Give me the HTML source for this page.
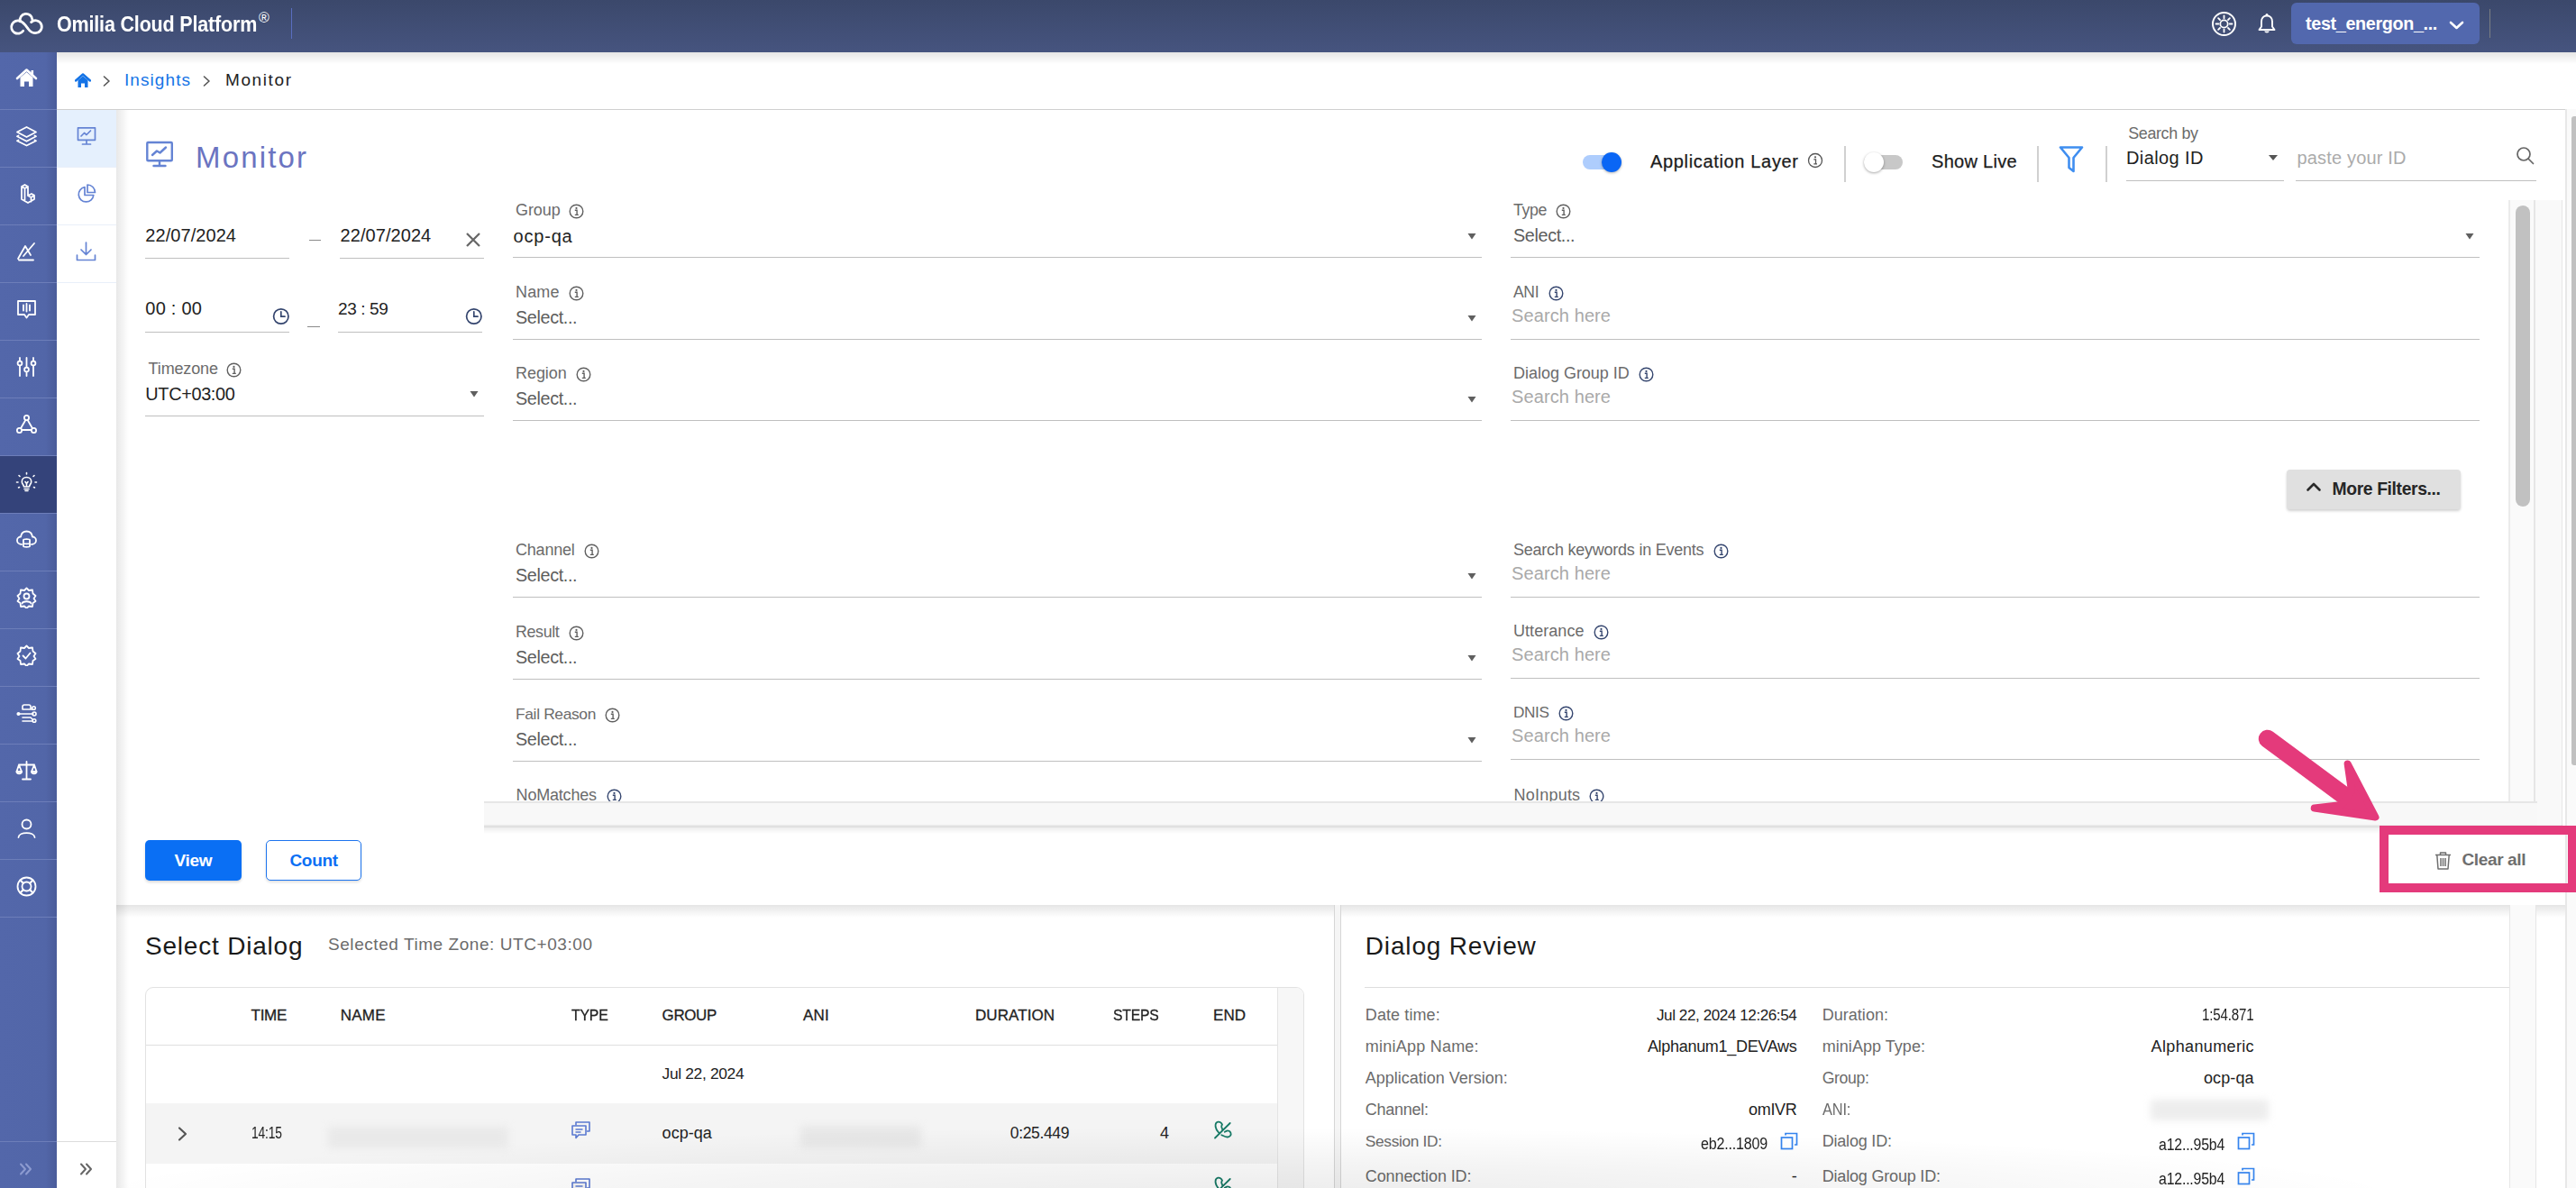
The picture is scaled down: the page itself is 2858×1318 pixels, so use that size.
<!DOCTYPE html>
<html><head><meta charset="utf-8"><title>Monitor</title>
<style>
html,body{margin:0;padding:0;}
body{width:2858px;height:1318px;overflow:hidden;position:relative;background:#fff;font-family:"Liberation Sans",sans-serif;}
.a{position:absolute;display:block;}
.t{position:absolute;white-space:nowrap;}
</style></head><body>
<div class="a" style="left:0px;top:0px;width:2858px;height:58px;background:linear-gradient(180deg,#3b486b 0%,#46547f 100%);"></div>
<div class="a" style="left:0px;top:58px;width:63px;height:1260px;background:linear-gradient(90deg,#5367aa 0%,#5266a8 80%,#4a5c9a 100%);"></div>
<div class="a" style="left:0px;top:121px;width:63px;height:1px;background:#6d7eb9;"></div>
<div class="a" style="left:0px;top:185px;width:63px;height:1px;background:#6d7eb9;"></div>
<div class="a" style="left:0px;top:249px;width:63px;height:1px;background:#6d7eb9;"></div>
<div class="a" style="left:0px;top:313px;width:63px;height:1px;background:#6d7eb9;"></div>
<div class="a" style="left:0px;top:377px;width:63px;height:1px;background:#6d7eb9;"></div>
<div class="a" style="left:0px;top:441px;width:63px;height:1px;background:#6d7eb9;"></div>
<div class="a" style="left:0px;top:505px;width:63px;height:1px;background:#6d7eb9;"></div>
<div class="a" style="left:0px;top:569px;width:63px;height:1px;background:#6d7eb9;"></div>
<div class="a" style="left:0px;top:633px;width:63px;height:1px;background:#6d7eb9;"></div>
<div class="a" style="left:0px;top:697px;width:63px;height:1px;background:#6d7eb9;"></div>
<div class="a" style="left:0px;top:761px;width:63px;height:1px;background:#6d7eb9;"></div>
<div class="a" style="left:0px;top:825px;width:63px;height:1px;background:#6d7eb9;"></div>
<div class="a" style="left:0px;top:889px;width:63px;height:1px;background:#6d7eb9;"></div>
<div class="a" style="left:0px;top:953px;width:63px;height:1px;background:#6d7eb9;"></div>
<div class="a" style="left:0px;top:1017px;width:63px;height:1px;background:#6d7eb9;"></div>
<div class="a" style="left:0px;top:506px;width:63px;height:63px;background:#34437a;"></div>
<div class="a" style="left:0px;top:1266px;width:63px;height:1px;background:#6d7eb9;"></div>
<div class="a" style="left:63px;top:58px;width:2783px;height:63px;background:#fff;"></div>
<div class="a" style="left:63px;top:58px;width:2795px;height:13px;background:linear-gradient(180deg,rgba(0,0,0,0.10),rgba(0,0,0,0));"></div>
<div class="a" style="left:63px;top:121px;width:2783px;height:1px;background:#cfcfcf;"></div>
<div class="a" style="left:63px;top:122px;width:66px;height:1196px;background:#fff;"></div>
<div class="a" style="left:63px;top:122px;width:66px;height:63px;background:#e5f0fd;"></div>
<div class="a" style="left:63px;top:185px;width:66px;height:1px;background:#e9eff9;"></div>
<div class="a" style="left:63px;top:249px;width:66px;height:1px;background:#e9eff9;"></div>
<div class="a" style="left:63px;top:313px;width:66px;height:1px;background:#e9eff9;"></div>
<div class="a" style="left:63px;top:1266px;width:66px;height:1px;background:#dcdcdc;"></div>
<div class="a" style="left:129px;top:122px;width:14px;height:1196px;background:linear-gradient(90deg,rgba(0,0,0,0.09),rgba(0,0,0,0));"></div>
<div class="a" style="left:2846px;top:121px;width:12px;height:1197px;background:#fafafa;border-left:2px solid #e8e8e8;box-sizing:border-box;"></div>
<div class="a" style="left:2853px;top:129px;width:5px;height:720px;background:#c1c1c1;border-radius:3px 0 0 3px;"></div>
<svg class="a" style="left:0px;top:0px;" width="60" height="58" viewBox="0 0 60 58"><g fill="none" stroke="#fff" stroke-width="3" stroke-linecap="round" transform="translate(29.2 26.2) scale(0.93) translate(-28.8 -26.2)"><path d="M25 34.8 A7.7 7.7 0 1 1 21.6 23.2"/><path d="M21.6 23.2 C25.5 24.5 28 28.5 31 32.5 C33 35.3 35.5 37.4 38.6 37.4 A7.5 7.5 0 1 0 34.6 24.5"/><path d="M21.4 23.6 A7.4 7.4 0 1 1 36 21.6"/></g></svg>
<div class="t" style="left:62.50px;top:11.98px;font-size:24px;line-height:30px;color:#fff;font-weight:700;letter-spacing:-0.200px;transform:scaleX(0.8963);transform-origin:left center;">Omilia Cloud Platform</div>
<div class="t" style="left:287.00px;top:9.95px;font-size:16px;line-height:20px;color:#fff;">®</div>
<div class="a" style="left:323px;top:9px;width:1px;height:34px;background:#5a6ec0;"></div>
<svg class="a" style="left:2453px;top:12px;" width="29" height="29" viewBox="0 0 29 29"><circle cx="14.5" cy="14.5" r="12.5" fill="none" stroke="#fff" stroke-width="2"/><circle cx="14.5" cy="14.5" r="4.2" fill="none" stroke="#fff" stroke-width="1.8"/><g stroke="#fff" stroke-width="1.8" stroke-linecap="round"><line x1="14.5" y1="5.5" x2="14.5" y2="8.3"/><line x1="14.5" y1="20.7" x2="14.5" y2="23.5"/><line x1="5.5" y1="14.5" x2="8.3" y2="14.5"/><line x1="20.7" y1="14.5" x2="23.5" y2="14.5"/><line x1="8.1" y1="8.1" x2="10" y2="10"/><line x1="19" y1="19" x2="20.9" y2="20.9"/><line x1="8.1" y1="20.9" x2="10" y2="19"/><line x1="19" y1="10" x2="20.9" y2="8.1"/></g></svg>
<svg class="a" style="left:2504px;top:14px;" width="22" height="24" viewBox="0 0 22 24"><path d="M11 3.5 C7 3.5 5 6.5 5 10 L5 15.5 L2.5 19 L19.5 19 L17 15.5 L17 10 C17 6.5 15 3.5 11 3.5 Z" fill="none" stroke="#fff" stroke-width="1.9" stroke-linejoin="round"/><circle cx="11" cy="2.6" r="1.5" fill="#fff"/><path d="M8.3 20.5 C8.5 23 13.5 23 13.7 20.5 Z" fill="#fff"/></svg>
<div class="a" style="left:2542px;top:3px;width:209px;height:46px;background:#5268ae;border-radius:6px;"></div>
<div class="t" style="left:2558.00px;top:14.05px;font-size:19.77px;line-height:25px;color:#fff;font-weight:700;letter-spacing:-0.348px;">test_energon_...</div>
<svg class="a" style="left:2717px;top:23px;" width="17" height="10" viewBox="0 0 17 10"><path d="M2 2 L8.5 8 L15 2" fill="none" stroke="#fff" stroke-width="2.6" stroke-linecap="round" stroke-linejoin="round"/></svg>
<div class="a" style="left:2762px;top:10px;width:1px;height:32px;background:#7b7f82;"></div>
<svg class="a" style="left:17px;top:75px;" width="25" height="24" viewBox="0 0 25 24"><path d="M2 12 L12.5 2.5 L23 12" fill="none" stroke="#fff" stroke-width="2.6" stroke-linecap="round" stroke-linejoin="round"/><path d="M5.5 11 L12.5 5 L19.5 11 L19.5 21 L15 21 L15 15.5 L10 15.5 L10 21 L5.5 21 Z" fill="#fff"/><rect x="17.5" y="3" width="2.6" height="6" fill="#fff"/></svg>
<svg class="a" style="left:17px;top:139px;" width="25" height="24" viewBox="0 0 25 24"><path d="M12.5 2 L23 7.5 L12.5 13 L2 7.5 Z" fill="none" stroke="#fff" stroke-width="1.8" stroke-linecap="round" stroke-linejoin="round"/><path d="M3.5 11.5 L2 12.3 L12.5 17.8 L23 12.3 L21.5 11.5" fill="none" stroke="#fff" stroke-width="1.8" stroke-linecap="round" stroke-linejoin="round"/><path d="M3.5 16.5 L2 17.3 L12.5 22.5 L23 17.3 L21.5 16.5" fill="none" stroke="#fff" stroke-width="1.8" stroke-linecap="round" stroke-linejoin="round"/></svg>
<svg class="a" style="left:17px;top:203px;" width="25" height="24" viewBox="0 0 25 24"><path d="M7 4 L10.5 2 L14 4 L14 14 L18 12 L21 13.8 L21 18 L14 22 L7 18 Z M7 4 L10.5 6 L14 4 M10.5 6 L10.5 20 M14 14 L17.5 16 L21 13.8 M17.5 16 L17.5 20.5" fill="none" stroke="#fff" stroke-width="1.8" stroke-linecap="round" stroke-linejoin="round"/></svg>
<svg class="a" style="left:17px;top:267px;" width="25" height="24" viewBox="0 0 25 24"><path d="M3 20 L11 6 L17 16 M4 21.5 L20 21.5 M9 17 L21 3" fill="none" stroke="#fff" stroke-width="1.8" stroke-linecap="round" stroke-linejoin="round"/></svg>
<svg class="a" style="left:17px;top:331px;" width="25" height="24" viewBox="0 0 25 24"><path d="M3 3 L22 3 L22 18 L15 18 L12.5 21.5 L10 18 L3 18 Z" fill="none" stroke="#fff" stroke-width="1.8" stroke-linecap="round" stroke-linejoin="round"/><path d="M9 7.5 L9 13.5 M12.5 6 L12.5 14.5 M16 7.5 L16 13.5" fill="none" stroke="#fff" stroke-width="1.8" stroke-linecap="round" stroke-linejoin="round"/></svg>
<svg class="a" style="left:17px;top:395px;" width="25" height="24" viewBox="0 0 25 24"><path d="M5 2 L5 22 M12.5 2 L12.5 22 M20 2 L20 22" fill="none" stroke="#fff" stroke-width="1.8" stroke-linecap="round" stroke-linejoin="round"/><circle cx="5" cy="8" r="2.4" fill="#5266a8" stroke="#fff" stroke-width="1.8"/><circle cx="12.5" cy="15" r="2.4" fill="#5266a8" stroke="#fff" stroke-width="1.8"/><circle cx="20" cy="8" r="2.4" fill="#5266a8" stroke="#fff" stroke-width="1.8"/></svg>
<svg class="a" style="left:17px;top:459px;" width="25" height="24" viewBox="0 0 25 24"><path d="M12.5 5 L5 18 L20 18 Z" fill="none" stroke="#fff" stroke-width="1.8" stroke-linecap="round" stroke-linejoin="round"/><circle cx="12.5" cy="4.5" r="2.6" fill="#5266a8" stroke="#fff" stroke-width="1.8"/><circle cx="4.5" cy="18.5" r="2.6" fill="#5266a8" stroke="#fff" stroke-width="1.8"/><circle cx="20.5" cy="18.5" r="2.6" fill="#5266a8" stroke="#fff" stroke-width="1.8"/></svg>
<svg class="a" style="left:17px;top:523px;" width="25" height="24" viewBox="0 0 25 24"><path d="M12.5 6.5 C9 6.5 7.3 9 7.3 11.5 C7.3 14 9.5 15 9.5 17 L15.5 17 C15.5 15 17.7 14 17.7 11.5 C17.7 9 16 6.5 12.5 6.5 Z M10 19.5 L15 19.5 M11 21.5 L14 21.5 M11 11.5 L12.5 13.5 L14 11.5 M12.5 13.5 L12.5 16.5" fill="none" stroke="#fff" stroke-width="1.6" stroke-linecap="round" stroke-linejoin="round"/><path d="M12.5 1.5 L12.5 3 M4 4.5 L5 5.5 M21 4.5 L20 5.5 M1.5 12 L3 12 M22 12 L23.5 12 M3.5 18 L4.5 17.5 M21.5 18 L20.5 17.5" fill="none" stroke="#fff" stroke-width="1.6" stroke-linecap="round" stroke-linejoin="round"/></svg>
<svg class="a" style="left:17px;top:587px;" width="25" height="24" viewBox="0 0 25 24"><path d="M7 17 C3.5 17 2 14.5 2 12.5 C2 10 4 8.5 6 8.5 C6.5 5 9 2.5 12.5 2.5 C16 2.5 18.5 5 19 8.5 C21 8.5 23 10 23 12.5 C23 14.5 21.5 17 18 17" fill="none" stroke="#fff" stroke-width="1.8" stroke-linecap="round" stroke-linejoin="round"/><path d="M9 12 C9 11 16 11 16 12 M9 15.5 C9 16.5 16 16.5 16 15.5 M9 19 C9 20 16 20 16 19 M9 12 L9 19 M16 12 L16 19" fill="none" stroke="#fff" stroke-width="1.8" stroke-linecap="round" stroke-linejoin="round"/></svg>
<svg class="a" style="left:17px;top:651px;" width="25" height="24" viewBox="0 0 25 24"><path d="M12.5 1.5 L15 4 L19 3.5 L19.5 7.5 L22.5 10 L20.5 13 L22.5 16 L19.5 18 L19 22 L15 21.5 L12.5 24 L10 21.5 L6 22 L5.5 18 L2.5 16 L4.5 13 L2.5 10 L5.5 7.5 L6 3.5 L10 4 Z" fill="none" stroke="#fff" stroke-width="1.8" stroke-linecap="round" stroke-linejoin="round"/><circle cx="12.5" cy="10.5" r="3" fill="none" stroke="#fff" stroke-width="1.8" stroke-linecap="round" stroke-linejoin="round"/><path d="M7.5 18.5 C8.5 15.5 16.5 15.5 17.5 18.5" fill="none" stroke="#fff" stroke-width="1.8" stroke-linecap="round" stroke-linejoin="round"/></svg>
<svg class="a" style="left:17px;top:715px;" width="25" height="24" viewBox="0 0 25 24"><path d="M12.5 1.5 L15 4 L19 3.5 L19.5 7.5 L22.5 10 L20.5 13 L22.5 16 L19.5 18 L19 22 L15 21.5 L12.5 24 L10 21.5 L6 22 L5.5 18 L2.5 16 L4.5 13 L2.5 10 L5.5 7.5 L6 3.5 L10 4 Z" fill="none" stroke="#fff" stroke-width="1.8" stroke-linecap="round" stroke-linejoin="round"/><path d="M8.5 12.5 L11.5 15.5 L16.5 9.5" fill="none" stroke="#fff" stroke-width="1.8" stroke-linecap="round" stroke-linejoin="round"/></svg>
<svg class="a" style="left:17px;top:779px;" width="25" height="24" viewBox="0 0 25 24"><path d="M8 8 L8 5 C8 3.5 9 3 10 3 L15 3 C16 3 17 3.5 17 5 L17 8 M2.5 13 L20 13 M8 8 L19 8 M8 17 L17 17 L19 19 M8 21 L19 21" fill="none" stroke="#fff" stroke-width="1.6" stroke-linecap="round" stroke-linejoin="round"/><circle cx="3.5" cy="13" r="2" fill="#fff"/><circle cx="21" cy="13" r="2" fill="none" stroke="#fff" stroke-width="1.6" stroke-linecap="round" stroke-linejoin="round"/><circle cx="21" cy="20.5" r="1.8" fill="none" stroke="#fff" stroke-width="1.6" stroke-linecap="round" stroke-linejoin="round"/><circle cx="20.5" cy="6.5" r="1.8" fill="none" stroke="#fff" stroke-width="1.6" stroke-linecap="round" stroke-linejoin="round"/></svg>
<svg class="a" style="left:17px;top:843px;" width="25" height="24" viewBox="0 0 25 24"><path d="M12.5 2 L12.5 21 M8 21.5 L17 21.5 M4 5.5 L21 5.5 M4 5.5 L1.5 13 M4 5.5 L7 13 M21 5.5 L18 13 M21 5.5 L23.5 13" fill="none" stroke="#fff" stroke-width="1.8" stroke-linecap="round" stroke-linejoin="round"/><path d="M1.5 13 C1.5 16 7 16 7 13 Z M18 13 C18 16 23.5 16 23.5 13 Z" fill="none" stroke="#fff" stroke-width="1.8" stroke-linecap="round" stroke-linejoin="round"/></svg>
<svg class="a" style="left:17px;top:907px;" width="25" height="24" viewBox="0 0 25 24"><circle cx="12.5" cy="7.5" r="5" fill="none" stroke="#fff" stroke-width="1.8" stroke-linecap="round" stroke-linejoin="round"/><path d="M3.5 22 C4 15.5 21 15.5 21.5 22" fill="none" stroke="#fff" stroke-width="1.8" stroke-linecap="round" stroke-linejoin="round"/></svg>
<svg class="a" style="left:17px;top:971px;" width="25" height="24" viewBox="0 0 25 24"><circle cx="12.5" cy="12.5" r="10" fill="none" stroke="#fff" stroke-width="1.8" stroke-linecap="round" stroke-linejoin="round"/><circle cx="12.5" cy="12.5" r="5" fill="none" stroke="#fff" stroke-width="1.8" stroke-linecap="round" stroke-linejoin="round"/><path d="M5.5 5.5 L9 9 M19.5 5.5 L16 9 M5.5 19.5 L9 16 M19.5 19.5 L16 16" fill="none" stroke="#fff" stroke-width="2.2" stroke-linecap="round" stroke-linejoin="round"/></svg>
<svg class="a" style="left:20px;top:1289px;" width="17" height="16" viewBox="0 0 17 16"><path d="M3 2.5 L8 8 L3 13.5 M9 2.5 L14 8 L9 13.5" fill="none" stroke="#8d9bd0" stroke-width="2" stroke-linecap="round" stroke-linejoin="round"/></svg>
<svg class="a" style="left:87px;top:1289px;" width="17" height="16" viewBox="0 0 17 16"><path d="M3 2.5 L8 8 L3 13.5 M9 2.5 L14 8 L9 13.5" fill="none" stroke="#666" stroke-width="2" stroke-linecap="round" stroke-linejoin="round"/></svg>
<svg class="a" style="left:83px;top:81px;" width="18" height="17" viewBox="0 0 18 17"><path d="M1 8.5 L9 1.5 L17 8.5" fill="none" stroke="#1473e6" stroke-width="2.4" stroke-linecap="round" stroke-linejoin="round"/><path d="M3.5 8 L9 3.5 L14.5 8 L14.5 16 L11 16 L11 11.5 L7 11.5 L7 16 L3.5 16 Z" fill="#1473e6"/></svg>
<svg class="a" style="left:113px;top:83px;" width="11" height="14" viewBox="0 0 11 14"><path d="M2.5 2 L8 7 L2.5 12" fill="none" stroke="#555" stroke-width="1.6" stroke-linecap="round" stroke-linejoin="round"/></svg>
<div class="t" style="left:138.00px;top:77.01px;font-size:19px;line-height:24px;color:#1473e6;letter-spacing:1.074px;">Insights</div>
<svg class="a" style="left:224px;top:83px;" width="11" height="14" viewBox="0 0 11 14"><path d="M2.5 2 L8 7 L2.5 12" fill="none" stroke="#555" stroke-width="1.6" stroke-linecap="round" stroke-linejoin="round"/></svg>
<div class="t" style="left:250.00px;top:77.01px;font-size:19px;line-height:24px;color:#222;letter-spacing:1.607px;">Monitor</div>
<svg class="a" style="left:84px;top:140px;" width="24" height="22" viewBox="0 0 24 22"><rect x="2.5" y="1.8" width="19" height="13.5" fill="none" stroke="#6584d4" stroke-width="1.7" stroke-linecap="round" stroke-linejoin="round"/><path d="M12 15.5 L12 19 M7.5 20 L16.5 20 M6 11 L9.5 7.5 L12 9.5 L16.5 5" fill="none" stroke="#6584d4" stroke-width="1.7" stroke-linecap="round" stroke-linejoin="round"/></svg>
<svg class="a" style="left:84px;top:203px;" width="24" height="23" viewBox="0 0 24 23"><path d="M10 4.5 A8.3 8.3 0 1 0 19.8 13.5 L10 13.5 Z" fill="none" stroke="#6584d4" stroke-width="1.7" stroke-linecap="round" stroke-linejoin="round"/><path d="M13 2 L13 10.5 L21.5 10.5 A8.5 8.5 0 0 0 13 2 Z" fill="none" stroke="#6584d4" stroke-width="1.7" stroke-linecap="round" stroke-linejoin="round"/></svg>
<svg class="a" style="left:83px;top:267px;" width="25" height="24" viewBox="0 0 25 24"><path d="M12.5 2 L12.5 15 M7 10 L12.5 15.5 L18 10 M2.5 16 L2.5 21.5 L22.5 21.5 L22.5 16" fill="none" stroke="#6584d4" stroke-width="1.7" stroke-linecap="round" stroke-linejoin="round"/></svg>
<svg class="a" style="left:159px;top:155px;" width="36" height="32" viewBox="0 0 36 32"><rect x="4.3" y="3" width="27.5" height="20.3" rx="1" fill="none" stroke="#6584d4" stroke-width="2.4"/><path d="M18 23.5 L18 28 M11.5 29 L24.5 29" fill="none" stroke="#6584d4" stroke-width="2.4" stroke-linecap="round"/><path d="M10 17 L15 12.5 L18.5 14.5 L25 8.5" fill="none" stroke="#6584d4" stroke-width="2.4" stroke-linecap="round" stroke-linejoin="round"/></svg>
<div class="t" style="left:217.00px;top:154.06px;font-size:33px;line-height:41px;color:#6b74c1;letter-spacing:2.160px;">Monitor</div>
<div class="a" style="left:1756px;top:172px;width:42px;height:16px;background:#aecdfd;border-radius:8px;"></div>
<div class="a" style="left:1777px;top:169px;width:22px;height:22px;background:#0a66f5;border-radius:50%;box-shadow:0 1px 3px rgba(0,0,0,0.3);"></div>
<div class="t" style="left:1831.00px;top:166.97px;font-size:20px;line-height:25px;color:#1c1c1c;letter-spacing:0.660px;-webkit-text-stroke:0.25px #1c1c1c;">Application Layer</div>
<svg class="a" style="left:2005px;top:169px;" width="18" height="18" viewBox="0 0 18 18"><circle cx="9" cy="9" r="7.5" fill="none" stroke="#555" stroke-width="1.3"/><circle cx="9" cy="5.3" r="1.1" fill="#555"/><path d="M7.3 7.8 L9.5 7.8 L9.5 12.8 M7.3 12.8 L11 12.8" fill="none" stroke="#555" stroke-width="1.3"/></svg>
<div class="a" style="left:2046px;top:162px;width:2px;height:40px;background:#d0d0d0;"></div>
<div class="a" style="left:2068px;top:172px;width:43px;height:16px;background:#c8c8c8;border-radius:8px;"></div>
<div class="a" style="left:2068px;top:169px;width:22px;height:22px;background:#fff;border-radius:50%;box-shadow:0 1px 3px rgba(0,0,0,0.35);"></div>
<div class="t" style="left:2143.00px;top:166.97px;font-size:20px;line-height:25px;color:#1c1c1c;letter-spacing:0.290px;-webkit-text-stroke:0.25px #1c1c1c;">Show Live</div>
<div class="a" style="left:2260px;top:162px;width:2px;height:40px;background:#d0d0d0;"></div>
<svg class="a" style="left:2283px;top:161px;" width="30" height="32" viewBox="0 0 30 32"><path d="M3 2.5 L27 2.5 L17.5 14 L17.5 29 L12.5 25 L12.5 14 Z" fill="none" stroke="#3f8ef0" stroke-width="2.6" stroke-linejoin="round"/></svg>
<div class="a" style="left:2336px;top:162px;width:2px;height:40px;background:#d0d0d0;"></div>
<div class="t" style="left:2361.30px;top:137.00px;font-size:17.88px;line-height:22px;color:#6b6b6b;letter-spacing:-0.351px;">Search by</div>
<div class="t" style="left:2359.00px;top:163.37px;font-size:20px;line-height:25px;color:#222;letter-spacing:0.405px;">Dialog ID</div>
<svg class="a" style="left:2516px;top:170px;" width="12" height="10" viewBox="0 0 12 10"><path d="M1 2 L11 2 L6 8 Z" fill="#555"/></svg>
<div class="a" style="left:2359px;top:200px;width:175px;height:1px;background:#bfbfbf;"></div>
<div class="t" style="left:2548.50px;top:163.37px;font-size:20px;line-height:25px;color:#ababab;letter-spacing:0.171px;">paste your ID</div>
<svg class="a" style="left:2791px;top:162px;" width="22" height="22" viewBox="0 0 22 22"><circle cx="9" cy="9" r="7" fill="none" stroke="#666" stroke-width="1.7"/><line x1="14" y1="14" x2="19.5" y2="19.5" stroke="#666" stroke-width="1.7" stroke-linecap="round"/></svg>
<div class="a" style="left:2547px;top:200px;width:267px;height:1px;background:#bfbfbf;"></div>
<div class="t" style="left:161.30px;top:248.97px;font-size:20px;line-height:25px;color:#222;letter-spacing:0.067px;">22/07/2024</div>
<div class="a" style="left:161px;top:286px;width:160px;height:1px;background:#bfbfbf;"></div>
<div class="a" style="left:343px;top:266px;width:13px;height:1px;background:#8a8a8a;"></div>
<div class="t" style="left:377.50px;top:248.97px;font-size:20px;line-height:25px;color:#222;letter-spacing:0.067px;">22/07/2024</div>
<div class="a" style="left:377px;top:286px;width:160px;height:1px;background:#bfbfbf;"></div>
<svg class="a" style="left:516px;top:257px;" width="19" height="19" viewBox="0 0 19 19"><path d="M2 2 L16 16 M16 2 L2 16" stroke="#686868" stroke-width="2.3"/></svg>
<div class="t" style="left:161.30px;top:330.17px;font-size:20px;line-height:25px;color:#222;letter-spacing:0.240px;">00 : 00</div>
<svg class="a" style="left:302px;top:341px;" width="20" height="20" viewBox="0 0 20 20"><circle cx="9.8" cy="10" r="8.2" fill="none" stroke="#34456e" stroke-width="1.7"/><path d="M9.8 4.8 L9.8 10.2 L14 10.2" fill="none" stroke="#34456e" stroke-width="1.7" stroke-linecap="round"/></svg>
<div class="a" style="left:161px;top:368px;width:160px;height:1px;background:#bfbfbf;"></div>
<div class="a" style="left:341px;top:362px;width:14px;height:1px;background:#8a8a8a;"></div>
<div class="t" style="left:375.00px;top:331.01px;font-size:19.0px;line-height:24px;color:#222;letter-spacing:-0.401px;">23 : 59</div>
<svg class="a" style="left:515.5px;top:341px;" width="20" height="20" viewBox="0 0 20 20"><circle cx="9.8" cy="10" r="8.2" fill="none" stroke="#34456e" stroke-width="1.7"/><path d="M9.8 4.8 L9.8 10.2 L14 10.2" fill="none" stroke="#34456e" stroke-width="1.7" stroke-linecap="round"/></svg>
<div class="a" style="left:375px;top:368px;width:160px;height:1px;background:#bfbfbf;"></div>
<div class="t" style="left:164.60px;top:397.76px;font-size:18px;line-height:22px;color:#6b6b6b;letter-spacing:-0.138px;">Timezone</div>
<svg class="a" style="left:251px;top:401.5px;" width="17" height="17" viewBox="0 0 17 17"><circle cx="8.5" cy="8.5" r="7.3" fill="none" stroke="#5f5f5f" stroke-width="1.4"/><circle cx="8.5" cy="4.9" r="1.1" fill="#5f5f5f"/><path d="M6.8 7.3 L9.1 7.3 L9.1 12.4 M6.8 12.4 L10.8 12.4" fill="none" stroke="#5f5f5f" stroke-width="1.4"/></svg>
<div class="t" style="left:161.30px;top:424.59px;font-size:19.92px;line-height:25px;color:#222;letter-spacing:-0.353px;">UTC+03:00</div>
<svg class="a" style="left:520.5px;top:432.5px;" width="10" height="8" viewBox="0 0 10 8"><path d="M0.5 1 L9.5 1 L5 7.5 Z" fill="#5f5f5f"/></svg>
<div class="a" style="left:161px;top:461px;width:376px;height:1px;background:#bfbfbf;"></div>
<div class="t" style="left:572.00px;top:221.76px;font-size:18px;line-height:22px;color:#6b6b6b;letter-spacing:-0.082px;">Group</div>
<svg class="a" style="left:630.5px;top:225.5px;" width="17" height="17" viewBox="0 0 17 17"><circle cx="8.5" cy="8.5" r="7.3" fill="none" stroke="#5f5f5f" stroke-width="1.4"/><circle cx="8.5" cy="4.9" r="1.1" fill="#5f5f5f"/><path d="M6.8 7.3 L9.1 7.3 L9.1 12.4 M6.8 12.4 L10.8 12.4" fill="none" stroke="#5f5f5f" stroke-width="1.4"/></svg>
<div class="t" style="left:569.50px;top:249.57px;font-size:20px;line-height:25px;color:#222;letter-spacing:0.809px;">ocp-qa</div>
<svg class="a" style="left:1627.5px;top:257.5px;" width="10" height="8" viewBox="0 0 10 8"><path d="M0.5 1 L9.5 1 L5 7.5 Z" fill="#5f5f5f"/></svg>
<div class="a" style="left:569px;top:285px;width:1075px;height:1px;background:#bfbfbf;"></div>
<div class="t" style="left:572.00px;top:312.76px;font-size:18px;line-height:22px;color:#6b6b6b;letter-spacing:0.161px;">Name</div>
<svg class="a" style="left:630.5px;top:316.5px;" width="17" height="17" viewBox="0 0 17 17"><circle cx="8.5" cy="8.5" r="7.3" fill="none" stroke="#5f5f5f" stroke-width="1.4"/><circle cx="8.5" cy="4.9" r="1.1" fill="#5f5f5f"/><path d="M6.8 7.3 L9.1 7.3 L9.1 12.4 M6.8 12.4 L10.8 12.4" fill="none" stroke="#5f5f5f" stroke-width="1.4"/></svg>
<div class="t" style="left:572.00px;top:339.65px;font-size:19.76px;line-height:25px;color:#5c5c5c;letter-spacing:-0.349px;">Select...</div>
<svg class="a" style="left:1627.5px;top:348.5px;" width="10" height="8" viewBox="0 0 10 8"><path d="M0.5 1 L9.5 1 L5 7.5 Z" fill="#5f5f5f"/></svg>
<div class="a" style="left:569px;top:376px;width:1075px;height:1px;background:#bfbfbf;"></div>
<div class="t" style="left:572.00px;top:402.76px;font-size:18px;line-height:22px;color:#6b6b6b;letter-spacing:-0.049px;">Region</div>
<svg class="a" style="left:638.8px;top:406.5px;" width="17" height="17" viewBox="0 0 17 17"><circle cx="8.5" cy="8.5" r="7.3" fill="none" stroke="#5f5f5f" stroke-width="1.4"/><circle cx="8.5" cy="4.9" r="1.1" fill="#5f5f5f"/><path d="M6.8 7.3 L9.1 7.3 L9.1 12.4 M6.8 12.4 L10.8 12.4" fill="none" stroke="#5f5f5f" stroke-width="1.4"/></svg>
<div class="t" style="left:572.00px;top:429.65px;font-size:19.76px;line-height:25px;color:#5c5c5c;letter-spacing:-0.349px;">Select...</div>
<svg class="a" style="left:1627.5px;top:438.5px;" width="10" height="8" viewBox="0 0 10 8"><path d="M0.5 1 L9.5 1 L5 7.5 Z" fill="#5f5f5f"/></svg>
<div class="a" style="left:569px;top:466px;width:1075px;height:1px;background:#bfbfbf;"></div>
<div class="t" style="left:1679.00px;top:221.84px;font-size:17.78px;line-height:22px;color:#6b6b6b;letter-spacing:-0.349px;">Type</div>
<svg class="a" style="left:1726.0px;top:225.5px;" width="17" height="17" viewBox="0 0 17 17"><circle cx="8.5" cy="8.5" r="7.3" fill="none" stroke="#5f5f5f" stroke-width="1.4"/><circle cx="8.5" cy="4.9" r="1.1" fill="#5f5f5f"/><path d="M6.8 7.3 L9.1 7.3 L9.1 12.4 M6.8 12.4 L10.8 12.4" fill="none" stroke="#5f5f5f" stroke-width="1.4"/></svg>
<div class="t" style="left:1679.00px;top:248.65px;font-size:19.76px;line-height:25px;color:#5c5c5c;letter-spacing:-0.349px;">Select...</div>
<svg class="a" style="left:2734.5px;top:257.5px;" width="10" height="8" viewBox="0 0 10 8"><path d="M0.5 1 L9.5 1 L5 7.5 Z" fill="#5f5f5f"/></svg>
<div class="a" style="left:1676px;top:285px;width:1075px;height:1px;background:#bfbfbf;"></div>
<div class="t" style="left:1679.00px;top:312.93px;font-size:17.52px;line-height:22px;color:#6b6b6b;letter-spacing:-0.353px;">ANI</div>
<svg class="a" style="left:1717.5px;top:316.5px;" width="17" height="17" viewBox="0 0 17 17"><circle cx="8.5" cy="8.5" r="7.3" fill="none" stroke="#34456e" stroke-width="1.4"/><circle cx="8.5" cy="4.9" r="1.1" fill="#34456e"/><path d="M6.8 7.3 L9.1 7.3 L9.1 12.4 M6.8 12.4 L10.8 12.4" fill="none" stroke="#34456e" stroke-width="1.4"/></svg>
<div class="t" style="left:1677.00px;top:337.57px;font-size:20px;line-height:25px;color:#a9a9a9;letter-spacing:0.104px;">Search here</div>
<div class="a" style="left:1676px;top:376px;width:1075px;height:1px;background:#bfbfbf;"></div>
<div class="t" style="left:1679.00px;top:402.76px;font-size:18px;line-height:22px;color:#6b6b6b;letter-spacing:-0.019px;">Dialog Group ID</div>
<svg class="a" style="left:1817.8px;top:406.5px;" width="17" height="17" viewBox="0 0 17 17"><circle cx="8.5" cy="8.5" r="7.3" fill="none" stroke="#34456e" stroke-width="1.4"/><circle cx="8.5" cy="4.9" r="1.1" fill="#34456e"/><path d="M6.8 7.3 L9.1 7.3 L9.1 12.4 M6.8 12.4 L10.8 12.4" fill="none" stroke="#34456e" stroke-width="1.4"/></svg>
<div class="t" style="left:1677.00px;top:427.57px;font-size:20px;line-height:25px;color:#a9a9a9;letter-spacing:0.104px;">Search here</div>
<div class="a" style="left:1676px;top:466px;width:1075px;height:1px;background:#bfbfbf;"></div>
<div class="a" style="left:2537px;top:521px;width:193px;height:44px;background:#e0e0e0;border-radius:4px;box-shadow:0 2px 3px rgba(0,0,0,0.18);"></div>
<svg class="a" style="left:2558px;top:534px;" width="18" height="12" viewBox="0 0 18 12"><path d="M2.5 9.5 L9 3 L15.5 9.5" fill="none" stroke="#2a2a2a" stroke-width="2.6" stroke-linecap="round" stroke-linejoin="round"/></svg>
<div class="t" style="left:2587.50px;top:531.31px;font-size:19.29px;line-height:24px;color:#262626;font-weight:700;letter-spacing:-0.351px;">More Filters...</div>
<div class="t" style="left:572.00px;top:598.76px;font-size:18px;line-height:22px;color:#6b6b6b;letter-spacing:-0.209px;">Channel</div>
<svg class="a" style="left:647.8px;top:602.5px;" width="17" height="17" viewBox="0 0 17 17"><circle cx="8.5" cy="8.5" r="7.3" fill="none" stroke="#5f5f5f" stroke-width="1.4"/><circle cx="8.5" cy="4.9" r="1.1" fill="#5f5f5f"/><path d="M6.8 7.3 L9.1 7.3 L9.1 12.4 M6.8 12.4 L10.8 12.4" fill="none" stroke="#5f5f5f" stroke-width="1.4"/></svg>
<div class="t" style="left:572.00px;top:625.65px;font-size:19.76px;line-height:25px;color:#5c5c5c;letter-spacing:-0.349px;">Select...</div>
<svg class="a" style="left:1627.5px;top:634.5px;" width="10" height="8" viewBox="0 0 10 8"><path d="M0.5 1 L9.5 1 L5 7.5 Z" fill="#5f5f5f"/></svg>
<div class="a" style="left:569px;top:662px;width:1075px;height:1px;background:#bfbfbf;"></div>
<div class="t" style="left:572.00px;top:689.82px;font-size:17.83px;line-height:22px;color:#6b6b6b;letter-spacing:-0.348px;">Result</div>
<svg class="a" style="left:630.8px;top:693.5px;" width="17" height="17" viewBox="0 0 17 17"><circle cx="8.5" cy="8.5" r="7.3" fill="none" stroke="#5f5f5f" stroke-width="1.4"/><circle cx="8.5" cy="4.9" r="1.1" fill="#5f5f5f"/><path d="M6.8 7.3 L9.1 7.3 L9.1 12.4 M6.8 12.4 L10.8 12.4" fill="none" stroke="#5f5f5f" stroke-width="1.4"/></svg>
<div class="t" style="left:572.00px;top:716.65px;font-size:19.76px;line-height:25px;color:#5c5c5c;letter-spacing:-0.349px;">Select...</div>
<svg class="a" style="left:1627.5px;top:725.5px;" width="10" height="8" viewBox="0 0 10 8"><path d="M0.5 1 L9.5 1 L5 7.5 Z" fill="#5f5f5f"/></svg>
<div class="a" style="left:569px;top:753px;width:1075px;height:1px;background:#bfbfbf;"></div>
<div class="t" style="left:572.00px;top:780.96px;font-size:17.41px;line-height:22px;color:#6b6b6b;letter-spacing:-0.350px;">Fail Reason</div>
<svg class="a" style="left:671.4px;top:784.5px;" width="17" height="17" viewBox="0 0 17 17"><circle cx="8.5" cy="8.5" r="7.3" fill="none" stroke="#5f5f5f" stroke-width="1.4"/><circle cx="8.5" cy="4.9" r="1.1" fill="#5f5f5f"/><path d="M6.8 7.3 L9.1 7.3 L9.1 12.4 M6.8 12.4 L10.8 12.4" fill="none" stroke="#5f5f5f" stroke-width="1.4"/></svg>
<div class="t" style="left:572.00px;top:807.65px;font-size:19.76px;line-height:25px;color:#5c5c5c;letter-spacing:-0.349px;">Select...</div>
<svg class="a" style="left:1627.5px;top:816.5px;" width="10" height="8" viewBox="0 0 10 8"><path d="M0.5 1 L9.5 1 L5 7.5 Z" fill="#5f5f5f"/></svg>
<div class="a" style="left:569px;top:844px;width:1075px;height:1px;background:#bfbfbf;"></div>
<div class="t" style="left:1679.00px;top:598.76px;font-size:18px;line-height:22px;color:#6b6b6b;letter-spacing:-0.229px;">Search keywords in Events</div>
<svg class="a" style="left:1900.6px;top:602.5px;" width="17" height="17" viewBox="0 0 17 17"><circle cx="8.5" cy="8.5" r="7.3" fill="none" stroke="#34456e" stroke-width="1.4"/><circle cx="8.5" cy="4.9" r="1.1" fill="#34456e"/><path d="M6.8 7.3 L9.1 7.3 L9.1 12.4 M6.8 12.4 L10.8 12.4" fill="none" stroke="#34456e" stroke-width="1.4"/></svg>
<div class="t" style="left:1677.00px;top:623.57px;font-size:20px;line-height:25px;color:#a9a9a9;letter-spacing:0.104px;">Search here</div>
<div class="a" style="left:1676px;top:662px;width:1075px;height:1px;background:#bfbfbf;"></div>
<div class="t" style="left:1679.00px;top:688.76px;font-size:18px;line-height:22px;color:#6b6b6b;letter-spacing:0.058px;">Utterance</div>
<svg class="a" style="left:1767.5px;top:692.5px;" width="17" height="17" viewBox="0 0 17 17"><circle cx="8.5" cy="8.5" r="7.3" fill="none" stroke="#34456e" stroke-width="1.4"/><circle cx="8.5" cy="4.9" r="1.1" fill="#34456e"/><path d="M6.8 7.3 L9.1 7.3 L9.1 12.4 M6.8 12.4 L10.8 12.4" fill="none" stroke="#34456e" stroke-width="1.4"/></svg>
<div class="t" style="left:1677.00px;top:713.57px;font-size:20px;line-height:25px;color:#a9a9a9;letter-spacing:0.104px;">Search here</div>
<div class="a" style="left:1676px;top:752px;width:1075px;height:1px;background:#bfbfbf;"></div>
<div class="t" style="left:1679.00px;top:779.54px;font-size:17.18px;line-height:21px;color:#6b6b6b;letter-spacing:-0.349px;">DNIS</div>
<svg class="a" style="left:1729px;top:782.5px;" width="17" height="17" viewBox="0 0 17 17"><circle cx="8.5" cy="8.5" r="7.3" fill="none" stroke="#34456e" stroke-width="1.4"/><circle cx="8.5" cy="4.9" r="1.1" fill="#34456e"/><path d="M6.8 7.3 L9.1 7.3 L9.1 12.4 M6.8 12.4 L10.8 12.4" fill="none" stroke="#34456e" stroke-width="1.4"/></svg>
<div class="t" style="left:1677.00px;top:803.57px;font-size:20px;line-height:25px;color:#a9a9a9;letter-spacing:0.104px;">Search here</div>
<div class="a" style="left:1676px;top:842px;width:1075px;height:1px;background:#bfbfbf;"></div>
<div class="a" style="left:537px;top:860px;width:2250px;height:29px;overflow:hidden;">
<div class="t" style="left:35.60px;top:10.76px;font-size:18px;line-height:22px;color:#6b6b6b;letter-spacing:-0.205px;">NoMatches</div>
<svg class="a" style="left:135.7px;top:14.5px;" width="17" height="17" viewBox="0 0 17 17"><circle cx="8.5" cy="8.5" r="7.3" fill="none" stroke="#34456e" stroke-width="1.4"/><circle cx="8.5" cy="4.9" r="1.1" fill="#34456e"/><path d="M6.8 7.3 L9.1 7.3 L9.1 12.4 M6.8 12.4 L10.8 12.4" fill="none" stroke="#34456e" stroke-width="1.4"/></svg>
<div class="t" style="left:1142.60px;top:10.76px;font-size:18px;line-height:22px;color:#6b6b6b;letter-spacing:0.208px;">NoInputs</div>
<svg class="a" style="left:1225.5px;top:14.5px;" width="17" height="17" viewBox="0 0 17 17"><circle cx="8.5" cy="8.5" r="7.3" fill="none" stroke="#34456e" stroke-width="1.4"/><circle cx="8.5" cy="4.9" r="1.1" fill="#34456e"/><path d="M6.8 7.3 L9.1 7.3 L9.1 12.4 M6.8 12.4 L10.8 12.4" fill="none" stroke="#34456e" stroke-width="1.4"/></svg>
</div>
<div class="a" style="left:2783px;top:222px;width:30px;height:667px;background:#fafafa;border-left:2px solid #ebebeb;border-right:2px solid #e6e6e6;box-sizing:border-box;"></div>
<div class="a" style="left:2791px;top:228px;width:16px;height:334px;background:#c1c1c1;border-radius:8px;"></div>
<div class="a" style="left:2813px;top:222px;width:30px;height:696px;background:#f9f9f9;border-right:1px solid #e6e6e6;box-sizing:border-box;"></div>
<div class="a" style="left:537px;top:889px;width:2278px;height:29px;background:#f8f8f8;border-top:2px solid #e6e6e6;box-sizing:border-box;"></div>
<div class="a" style="left:537px;top:915px;width:2306px;height:3px;background:linear-gradient(180deg,rgba(0,0,0,0.04),rgba(0,0,0,0.12));"></div>
<div class="a" style="left:537px;top:918px;width:2306px;height:7px;background:linear-gradient(180deg,rgba(0,0,0,0.07),rgba(0,0,0,0));"></div>
<div class="a" style="left:129px;top:1004px;width:2717px;height:14px;background:linear-gradient(180deg,rgba(0,0,0,0.10),rgba(0,0,0,0));"></div>
<div class="a" style="left:161px;top:932px;width:107px;height:45px;background:#0a6ff4;border-radius:5px;box-shadow:0 2px 3px rgba(0,0,0,0.15);"></div>
<div class="t" style="left:193.50px;top:942.90px;font-size:19.04px;line-height:24px;color:#fff;font-weight:700;letter-spacing:-0.348px;">View</div>
<div class="a" style="left:295px;top:932px;width:106px;height:45px;background:#fff;border:1.5px solid #1c74ee;border-radius:5px;box-sizing:border-box;box-shadow:0 2px 3px rgba(0,0,0,0.12);"></div>
<div class="t" style="left:321.50px;top:942.91px;font-size:19.01px;line-height:24px;color:#0a6ff4;font-weight:700;letter-spacing:-0.349px;">Count</div>
<svg class="a" style="left:2700px;top:944px;" width="21" height="21" viewBox="0 0 21 21"><path d="M2 4.5 L19 4.5 M7.5 4.5 L7.5 2 L13.5 2 L13.5 4.5 M3.8 4.5 L5 20 L16 20 L17.2 4.5 M8 8 L8 17 M10.5 8 L10.5 17 M13 8 L13 17" fill="none" stroke="#6f6f6f" stroke-width="1.5" stroke-linejoin="round"/></svg>
<div class="t" style="left:2731.50px;top:942.41px;font-size:19.0px;line-height:24px;color:#6e6e6e;font-weight:700;letter-spacing:-0.366px;">Clear all</div>
<div class="t" style="left:161.00px;top:1031.79px;font-size:28px;line-height:35px;color:#1a1a1a;letter-spacing:0.793px;">Select Dialog</div>
<div class="t" style="left:364.00px;top:1036.41px;font-size:19px;line-height:24px;color:#6b6b6b;letter-spacing:0.563px;">Selected Time Zone: UTC+03:00</div>
<div class="a" style="left:1480px;top:1004px;width:8px;height:314px;background:#f5f5f5;border-left:1.5px solid #d6d6d6;border-right:1.5px solid #d6d6d6;box-sizing:border-box;"></div>
<div class="a" style="left:161px;top:1095px;width:1286px;height:260px;background:#fff;border:1px solid #e2e2e2;border-radius:9px;box-sizing:border-box;"></div>
<div class="a" style="left:1417px;top:1096px;width:29px;height:222px;background:#f7f7f7;border-left:1px solid #e4e4e4;box-sizing:border-box;border-radius:0 8px 0 0;"></div>
<div class="a" style="left:162px;top:1159px;width:1255px;height:1px;background:#e0e0e0;"></div>
<div class="t" style="left:278.60px;top:1115.81px;font-size:17px;line-height:21px;color:#222;letter-spacing:-0.303px;-webkit-text-stroke:0.3px #222;">TIME</div>
<div class="t" style="left:377.80px;top:1115.81px;font-size:17px;line-height:21px;color:#222;letter-spacing:0.227px;-webkit-text-stroke:0.3px #222;">NAME</div>
<div class="t" style="left:634.00px;top:1115.81px;font-size:17px;line-height:21px;color:#222;letter-spacing:-0.200px;-webkit-text-stroke:0.3px #222;transform:scaleX(0.9314);transform-origin:left center;">TYPE</div>
<div class="t" style="left:734.60px;top:1115.84px;font-size:16.91px;line-height:21px;color:#222;letter-spacing:-0.352px;-webkit-text-stroke:0.3px #222;">GROUP</div>
<div class="t" style="left:891.00px;top:1115.81px;font-size:17px;line-height:21px;color:#222;letter-spacing:0.180px;-webkit-text-stroke:0.3px #222;">ANI</div>
<div class="t" style="left:1082.00px;top:1115.81px;font-size:17px;line-height:21px;color:#222;letter-spacing:0.069px;-webkit-text-stroke:0.3px #222;">DURATION</div>
<div class="t" style="left:1235.00px;top:1115.81px;font-size:17px;line-height:21px;color:#222;letter-spacing:-0.200px;-webkit-text-stroke:0.3px #222;transform:scaleX(0.9228);transform-origin:left center;">STEPS</div>
<div class="t" style="left:1346.00px;top:1115.81px;font-size:17px;line-height:21px;color:#222;letter-spacing:0.053px;-webkit-text-stroke:0.3px #222;">END</div>
<div class="t" style="left:734.60px;top:1179.76px;font-size:17.41px;line-height:22px;color:#222;letter-spacing:-0.351px;">Jul 22, 2024</div>
<div class="a" style="left:162px;top:1224px;width:1255px;height:67px;background:#f4f4f4;"></div>
<div class="a" style="left:162px;top:1291px;width:1255px;height:27px;background:#fff;"></div>
<svg class="a" style="left:196px;top:1249px;" width="14" height="18" viewBox="0 0 14 18"><path d="M3 2.5 L10 9 L3 15.5" fill="none" stroke="#555" stroke-width="2.2" stroke-linecap="round" stroke-linejoin="round"/></svg>
<div class="t" style="left:278.60px;top:1246.16px;font-size:18px;line-height:22px;color:#222;letter-spacing:-0.200px;transform:scaleX(0.7684);transform-origin:left center;">14:15</div>
<div class="a" style="left:364px;top:1250px;width:200px;height:24px;background:#e9e9e9;border-radius:4px;filter:blur(4px);"></div>
<svg class="a" style="left:633px;top:1242px;" width="23" height="23" viewBox="0 0 23 23"><path d="M6 6.5 L6 3 L21 3 L21 13 L18 13" fill="none" stroke="#5b79d0" stroke-width="1.6" stroke-linejoin="round"/><path d="M2 7 L17 7 L17 17 L9 17 L6 20.5 L6 17 L2 17 Z" fill="#f4f4f4" stroke="#5b79d0" stroke-width="1.6" stroke-linejoin="round"/><path d="M5.5 11 L13.5 11 M5.5 14 L11.5 14" stroke="#5b79d0" stroke-width="1.5"/></svg>
<div class="t" style="left:734.60px;top:1246.16px;font-size:18px;line-height:22px;color:#222;letter-spacing:0.032px;">ocp-qa</div>
<div class="a" style="left:888px;top:1249px;width:134px;height:24px;background:#e7e7e7;border-radius:4px;filter:blur(4px);"></div>
<div class="t" style="left:1120.80px;top:1246.33px;font-size:17.51px;line-height:22px;color:#222;letter-spacing:-0.351px;">0:25.449</div>
<div class="t" style="left:1287.00px;top:1246.16px;font-size:18px;line-height:22px;color:#222;">4</div>
<svg class="a" style="left:1346px;top:1243px;" width="22" height="22" viewBox="0 0 22 22"><g fill="none" stroke="#177a66" stroke-width="1.8" stroke-linecap="round" stroke-linejoin="round"><path d="M2 19.5 L18.7 3"/><path d="M10.3 10.3 C10 8.5 8.8 7.6 9.3 6.2 L10 4.7 C9 2.3 7 1.5 5.3 1.7 C3 2.3 2.3 4.5 2.6 7 C3 9.8 4.6 12.3 6.8 14.4"/><path d="M9.3 16.2 C11.5 17.3 13.5 18.7 16 18.5 C18.5 18.3 20.3 16.2 19.5 14 C18.8 12.2 16.7 11 15 11.6 L12.8 12.8"/></g></svg>
<svg class="a" style="left:633px;top:1305px;" width="23" height="23" viewBox="0 0 23 23"><path d="M6 6.5 L6 3 L21 3 L21 13 L18 13" fill="none" stroke="#5b79d0" stroke-width="1.6" stroke-linejoin="round"/><path d="M2 7 L17 7 L17 17 L9 17 L6 20.5 L6 17 L2 17 Z" fill="#f4f4f4" stroke="#5b79d0" stroke-width="1.6" stroke-linejoin="round"/><path d="M5.5 11 L13.5 11 M5.5 14 L11.5 14" stroke="#5b79d0" stroke-width="1.5"/></svg>
<svg class="a" style="left:1346px;top:1305px;" width="22" height="22" viewBox="0 0 22 22"><g fill="none" stroke="#177a66" stroke-width="1.8" stroke-linecap="round" stroke-linejoin="round"><path d="M2 19.5 L18.7 3"/><path d="M10.3 10.3 C10 8.5 8.8 7.6 9.3 6.2 L10 4.7 C9 2.3 7 1.5 5.3 1.7 C3 2.3 2.3 4.5 2.6 7 C3 9.8 4.6 12.3 6.8 14.4"/><path d="M9.3 16.2 C11.5 17.3 13.5 18.7 16 18.5 C18.5 18.3 20.3 16.2 19.5 14 C18.8 12.2 16.7 11 15 11.6 L12.8 12.8"/></g></svg>
<div class="t" style="left:1514.80px;top:1032.19px;font-size:28px;line-height:35px;color:#1a1a1a;letter-spacing:0.836px;">Dialog Review</div>
<div class="a" style="left:1514px;top:1095px;width:1270px;height:1px;background:#dedede;"></div>
<div class="t" style="left:1514.80px;top:1115.26px;font-size:18px;line-height:22px;color:#6b6b6b;letter-spacing:0.097px;">Date time:</div>
<div class="t" style="left:1838.00px;top:1116.07px;font-size:17.1px;line-height:21px;color:#222;letter-spacing:-0.434px;">Jul 22, 2024 12:26:54</div>
<div class="t" style="left:1514.80px;top:1149.76px;font-size:18px;line-height:22px;color:#6b6b6b;letter-spacing:0.229px;">miniApp Name:</div>
<div class="t" style="left:1827.90px;top:1149.76px;font-size:18px;line-height:22px;color:#222;letter-spacing:-0.302px;">Alphanum1_DEVAws</div>
<div class="t" style="left:1514.80px;top:1185.36px;font-size:18px;line-height:22px;color:#6b6b6b;letter-spacing:-0.011px;">Application Version:</div>
<div class="t" style="left:1514.80px;top:1220.16px;font-size:18px;line-height:22px;color:#6b6b6b;letter-spacing:-0.265px;">Channel:</div>
<div class="t" style="left:1940.00px;top:1220.16px;font-size:18px;line-height:22px;color:#222;letter-spacing:-0.303px;">omIVR</div>
<div class="t" style="left:1514.80px;top:1255.39px;font-size:17.35px;line-height:22px;color:#6b6b6b;letter-spacing:-0.352px;">Session ID:</div>
<div class="t" style="left:1886.70px;top:1258.36px;font-size:18px;line-height:22px;color:#222;letter-spacing:-0.200px;transform:scaleX(0.8922);transform-origin:left center;">eb2...1809</div>
<div class="t" style="left:1514.80px;top:1293.76px;font-size:18px;line-height:22px;color:#6b6b6b;letter-spacing:-0.105px;">Connection ID:</div>
<div class="t" style="left:1987.81px;top:1293.76px;font-size:18px;line-height:22px;color:#222;">-</div>
<svg class="a" style="left:1975px;top:1256px;" width="20" height="20" viewBox="0 0 20 20"><rect x="1.5" y="6" width="12" height="12.5" fill="none" stroke="#3584ee" stroke-width="1.7"/><path d="M6 3.5 L6 1.5 L18.5 1.5 L18.5 14 L16 14" fill="none" stroke="#3584ee" stroke-width="1.7"/></svg>
<div class="t" style="left:2021.70px;top:1115.06px;font-size:18px;line-height:22px;color:#6b6b6b;letter-spacing:0.033px;">Duration:</div>
<div class="t" style="left:2443.00px;top:1115.06px;font-size:18px;line-height:22px;color:#222;letter-spacing:-0.200px;transform:scaleX(0.8388);transform-origin:left center;">1:54.871</div>
<div class="t" style="left:2021.70px;top:1150.06px;font-size:18px;line-height:22px;color:#6b6b6b;letter-spacing:0.047px;">miniApp Type:</div>
<div class="t" style="left:2386.60px;top:1150.06px;font-size:18px;line-height:22px;color:#222;letter-spacing:0.358px;">Alphanumeric</div>
<div class="t" style="left:2021.70px;top:1185.17px;font-size:17.68px;line-height:22px;color:#6b6b6b;letter-spacing:-0.350px;">Group:</div>
<div class="t" style="left:2445.00px;top:1185.06px;font-size:18px;line-height:22px;color:#222;letter-spacing:0.112px;">ocp-qa</div>
<div class="t" style="left:2021.70px;top:1220.06px;font-size:18px;line-height:22px;color:#6b6b6b;letter-spacing:-0.200px;transform:scaleX(0.9097);transform-origin:left center;">ANI:</div>
<div class="t" style="left:2021.70px;top:1255.36px;font-size:18px;line-height:22px;color:#6b6b6b;letter-spacing:-0.193px;">Dialog ID:</div>
<div class="t" style="left:2395.00px;top:1258.76px;font-size:18px;line-height:22px;color:#222;letter-spacing:-0.200px;transform:scaleX(0.8802);transform-origin:left center;">a12...95b4</div>
<div class="t" style="left:2021.70px;top:1294.46px;font-size:18px;line-height:22px;color:#6b6b6b;letter-spacing:-0.184px;">Dialog Group ID:</div>
<div class="t" style="left:2395.00px;top:1296.76px;font-size:18px;line-height:22px;color:#222;letter-spacing:-0.200px;transform:scaleX(0.8802);transform-origin:left center;">a12...95b4</div>
<div class="a" style="left:2386px;top:1220px;width:131px;height:23px;background:#ededed;border-radius:4px;filter:blur(4px);"></div>
<svg class="a" style="left:2482px;top:1256px;" width="20" height="20" viewBox="0 0 20 20"><rect x="1.5" y="6" width="12" height="12.5" fill="none" stroke="#3584ee" stroke-width="1.7"/><path d="M6 3.5 L6 1.5 L18.5 1.5 L18.5 14 L16 14" fill="none" stroke="#3584ee" stroke-width="1.7"/></svg>
<svg class="a" style="left:2482px;top:1295px;" width="20" height="20" viewBox="0 0 20 20"><rect x="1.5" y="6" width="12" height="12.5" fill="none" stroke="#3584ee" stroke-width="1.7"/><path d="M6 3.5 L6 1.5 L18.5 1.5 L18.5 14 L16 14" fill="none" stroke="#3584ee" stroke-width="1.7"/></svg>
<div class="a" style="left:2784px;top:1004px;width:30px;height:314px;background:#fafafa;border-left:1px solid #e6e6e6;border-right:1px solid #e6e6e6;box-sizing:border-box;"></div>
<div class="a" style="left:129px;top:1245px;width:2717px;height:73px;background:radial-gradient(ellipse 1300px 80px at 1250px 85px,rgba(0,0,0,0.08) 0%,rgba(0,0,0,0.045) 50%,rgba(0,0,0,0) 100%);"></div>
<div class="a" style="left:2640px;top:916px;width:219px;height:74px;border:10px solid #e43a7b;box-sizing:border-box;"></div>
<svg class="a" style="left:2490px;top:800px;" width="170" height="125" viewBox="0 0 170 125"><path d="M25.8 19.7 L122 91" stroke="#e43a7b" stroke-width="20" stroke-linecap="round"/><path d="M114.6 47.4 L145.5 106.5 L77.7 96.5 L108 93 L119 78 Z" fill="#e43a7b" stroke="#e43a7b" stroke-width="8" stroke-linejoin="round"/></svg>
</body></html>
